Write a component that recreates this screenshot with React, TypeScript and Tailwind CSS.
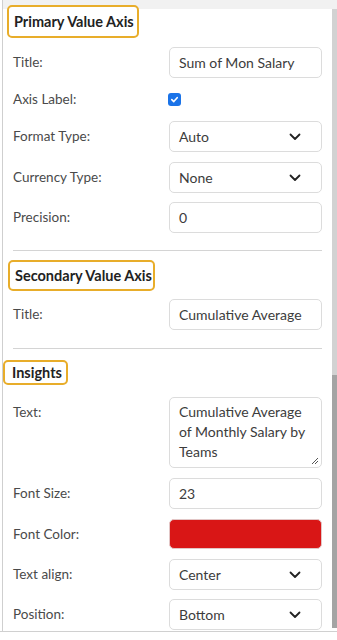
import { ReactNode } from 'react'

const font = { fontFamily: 'Lato, "Open Sans", sans-serif' }

function Chevron() {
  return (
    <svg width="12" height="8" viewBox="0 0 12 8" fill="none" className="shrink-0">
      <path d="M1.5 1.5 6 6l4.5-4.5" stroke="#222" strokeWidth="1.8" strokeLinecap="round" strokeLinejoin="round" />
    </svg>
  )
}

function Heading({ children, className }: { children: ReactNode; className: string }) {
  return (
    <div
      className={`border-2 border-[#e8ad2a] rounded-[5px] bg-white font-bold text-[14.5px] text-[#222] flex items-center ${className}`}
    >
      {children}
    </div>
  )
}

function Row({ label, children, className = '' }: { label: string; children: ReactNode; className?: string }) {
  return (
    <div className={`flex items-start justify-between pl-[9px] pr-[10px] ${className}`}>
      <span className="text-[13.5px] text-[#4a4a4a] leading-5 pt-[5px]">{label}</span>
      {children}
    </div>
  )
}

function Field({ value, select }: { value: string; select?: boolean }) {
  return (
    <div
      className={`w-[153px] h-[31px] border border-[#dcdcdc] rounded-[5px] bg-white flex items-center justify-between pl-[9px] text-[14px] text-[#3c3c3c] whitespace-nowrap ${
        select ? 'pr-[20px]' : 'pr-[4px]'
      }`}
    >
      <span>{value}</span>
      {select && <Chevron />}
    </div>
  )
}

export default function App() {
  return (
    <div className="w-[337px] h-[640px] bg-white overflow-hidden" style={font}>
      <div className="flex h-[632px] border-b-[1.5px] border-[#d0d0d0]">
        <div className="w-[3px] border-r-[1.5px] border-[#cfcfcf] bg-white" />
        <div className="flex-1 flex flex-col min-w-0">
          <div className="h-[9px] bg-[#f1f1f1] shrink-0" />
          <div className="flex flex-col pl-[1px]">
            <Heading className="-mt-[4px] ml-[3px] w-[132px] h-[33px] pl-[5px]">Primary Value Axis</Heading>

            <Row label="Title:" className="mt-[9px]">
              <Field value="Sum of Mon Salary" />
            </Row>
            <div className="flex items-center justify-between pl-[9px] pr-[10px] mt-[9px] h-[24px]">
              <span className="text-[13.5px] text-[#4a4a4a]">Axis Label:</span>
              <div className="w-[153px]">
                <div className="w-[13px] h-[13px] -ml-[1px] rounded-[3px] bg-[#1a73e8] flex items-center justify-center">
                  <svg width="9" height="9" viewBox="0 0 10 10" fill="none">
                    <path d="M2 5.2 4.2 7.3 8 3" stroke="white" strokeWidth="1.8" strokeLinecap="round" strokeLinejoin="round" />
                  </svg>
                </div>
              </div>
            </div>
            <Row label="Format Type:" className="mt-[10px]">
              <Field value="Auto" select />
            </Row>
            <Row label="Currency Type:" className="mt-[10px]">
              <Field value="None" select />
            </Row>
            <Row label="Precision:" className="mt-[9px]">
              <Field value="0" />
            </Row>

            <div className="mt-[17px] ml-[9px] mr-[10px] border-t border-[#d4d4d4]" />

            <Heading className="mt-[9px] ml-[4px] w-[147px] h-[31px] pl-[5px]">Secondary Value Axis</Heading>
            <Row label="Title:" className="mt-[8px]">
              <Field value="Cumulative Average" />
            </Row>

            <div className="mt-[18px] ml-[9px] mr-[10px] border-t border-[#d4d4d4]" />

            <Heading className="mt-[11px] -ml-[1px] w-[65px] h-[25px] pl-[7px]">Insights</Heading>
            <Row label="Text:" className="mt-[12px]">
              <div className="relative w-[153px] h-[71px] border border-[#dcdcdc] rounded-[5px] bg-white pl-[9px] pr-[12px] pt-[4px] text-[14px] leading-[20px] text-[#3c3c3c]">
                Cumulative Average of Monthly Salary by Teams
                <svg width="8" height="8" viewBox="0 0 8 8" className="absolute right-[2px] bottom-[2px]">
                  <path d="M7 1 1 7M7 4 4 7" stroke="#555" strokeWidth="1" />
                </svg>
              </div>
            </Row>
            <Row label="Font Size:" className="mt-[10px]">
              <Field value="23" />
            </Row>
            <Row label="Font Color:" className="mt-[10px]">
              <div className="w-[153px] h-[30px] rounded-[5px] bg-[#d91616] border border-[#e2c6c6]" />
            </Row>
            <Row label="Text align:" className="mt-[10px]">
              <Field value="Center" select />
            </Row>
            <Row label="Position:" className="mt-[9px]">
              <Field value="Bottom" select />
            </Row>
          </div>
        </div>
        <div className="w-[5px] flex flex-col">
          <div className="h-[9px] bg-[#f1f1f1]" />
          <div className="h-[366px] bg-[#d2d2d2]" />
          <div className="h-[253px] bg-[#a4a4a4]" />
        </div>
      </div>
    </div>
  )
}
